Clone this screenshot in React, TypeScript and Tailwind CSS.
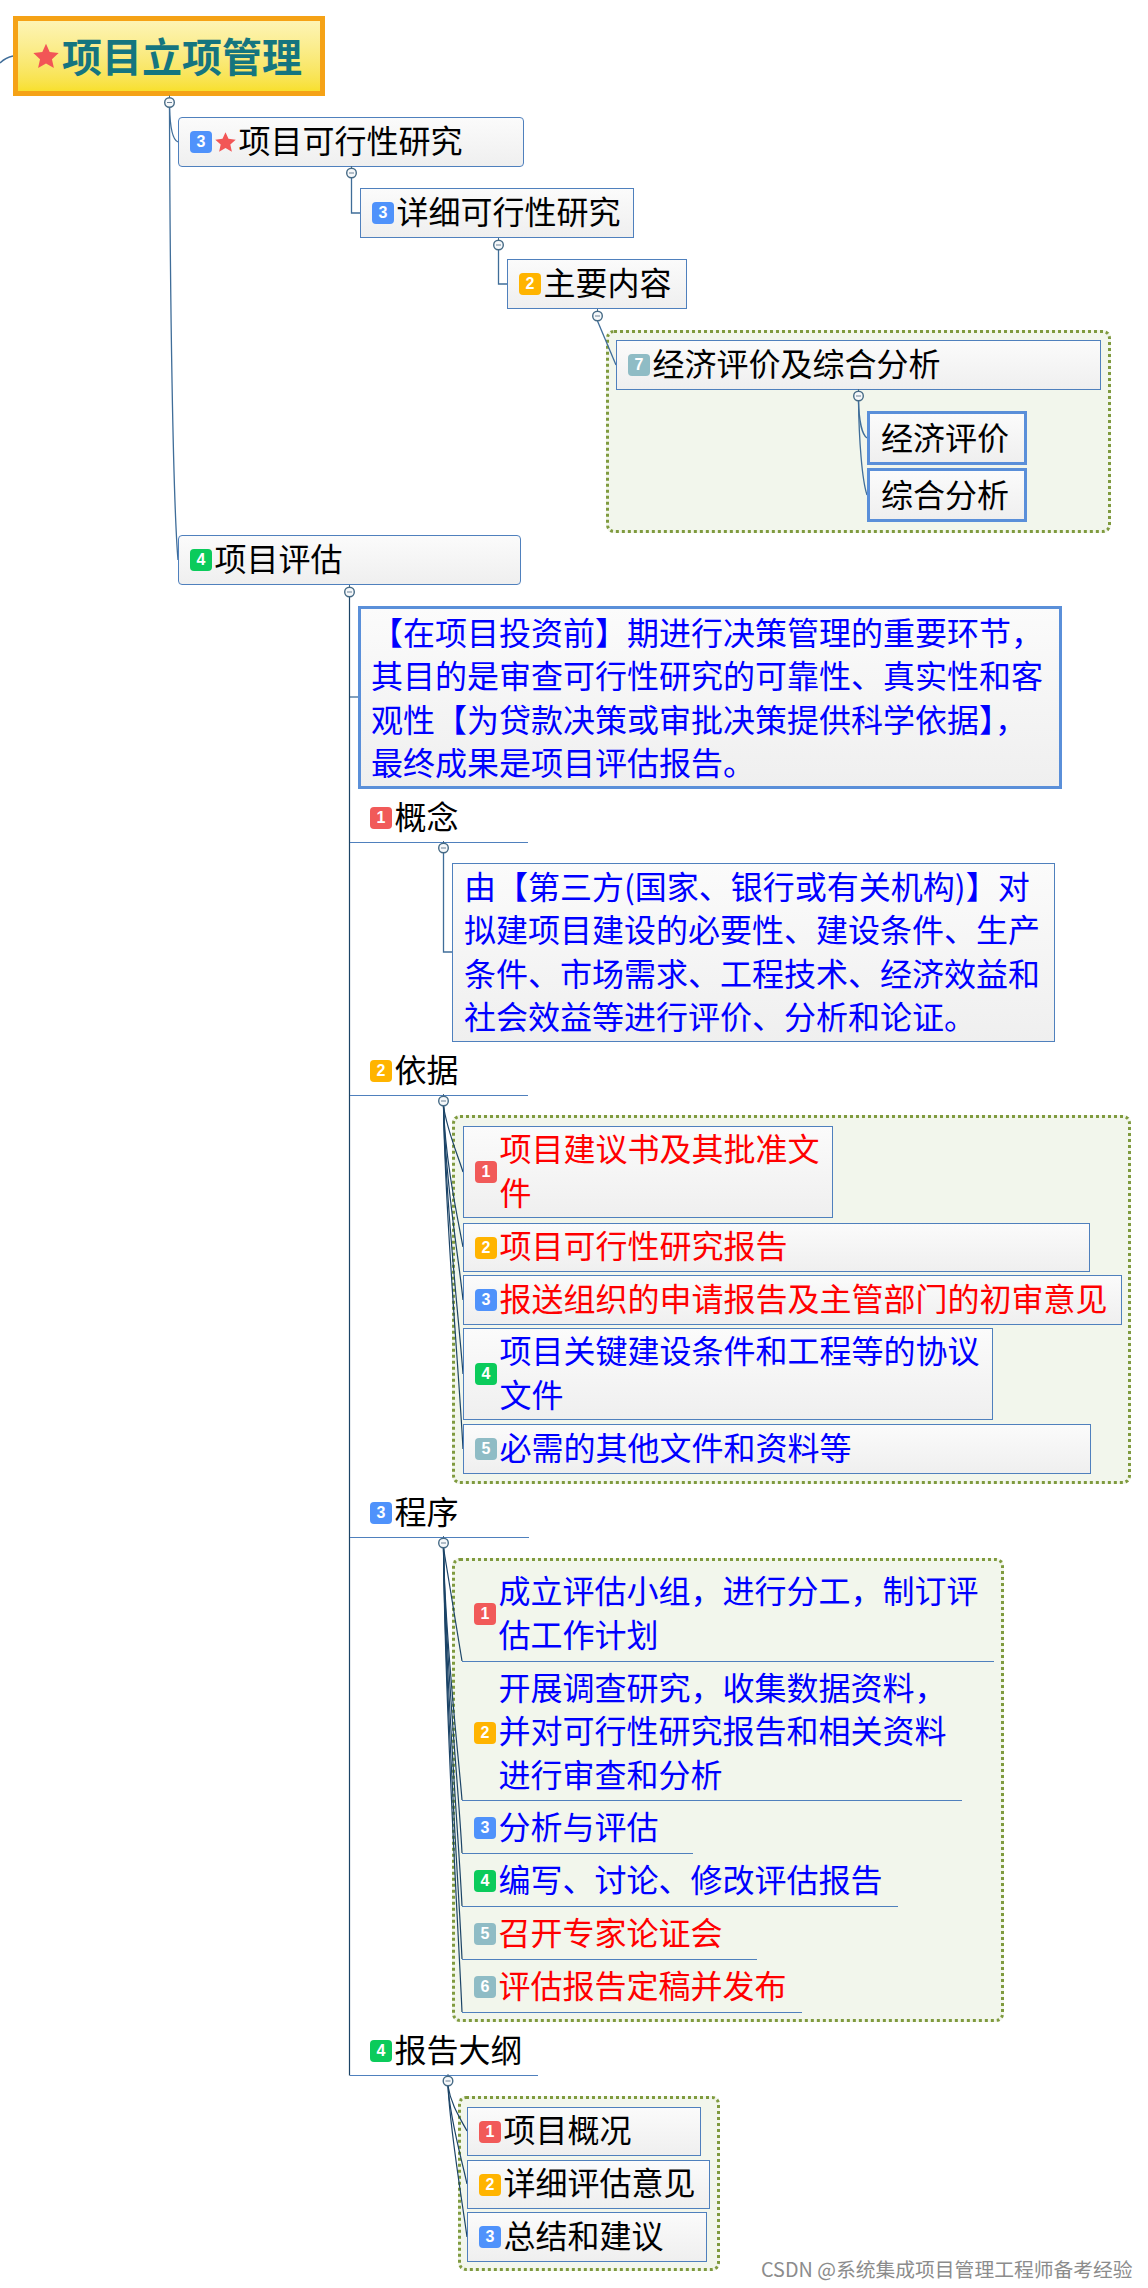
const CJK = "font-['Microsoft_YaHei','Noto_Sans_CJK_SC','Noto_Sans',sans-serif]";

const BADGE: Record<number, string> = {
  1: 'bg-[#f15a59]',
  2: 'bg-[#ffb400]',
  3: 'bg-[#4f92fb]',
  4: 'bg-[#0bcb5b]',
  5: 'bg-[#8fbcc5]',
  6: 'bg-[#8fbcc5]',
  7: 'bg-[#8fbcc5]',
};

function Badge({ n }: { n: number }) {
  return (
    <span
      className={`flex h-[22px] w-[22px] shrink-0 items-center justify-center rounded-[4px] font-['Liberation_Sans',sans-serif] text-[16px] font-bold leading-none text-white ${BADGE[n]}`}
    >
      {n}
    </span>
  );
}

function Star({ className }: { className: string }) {
  return (
    <svg viewBox="0 0 24 24" className={`shrink-0 ${className}`}>
      <path d="M12 .8l3.4 7.6 8.3.9-6.2 5.6 1.8 8.2L12 18.9l-7.3 4.2 1.8-8.2L.3 9.3l8.3-.9z" fill="#f25656" />
    </svg>
  );
}

const BOX = 'bg-gradient-to-b from-[#fbfbfb] to-[#efefef] border-[#4f80bd]';

type Item = { cls: string; n?: number; star?: boolean; lines: string[]; color: string };

function Node({ cls, n, star, lines, color }: Item) {
  return (
    <div className={`absolute flex items-center box-border ${cls}`}>
      {n ? <Badge n={n} /> : null}
      {star ? <Star className="ml-[3px] h-[22px] w-[21px]" /> : null}
      <div className={`ml-[2.500px] whitespace-nowrap pb-[5px] text-[32px] leading-[43.3px] ${color}`}>
        {lines.map((l) => (
          <div key={l}>{l}</div>
        ))}
      </div>
    </div>
  );
}

const BK = 'text-[#000000]';
const BL = 'text-[#0000ff]';
const RD = 'text-[#ff0000]';
const N1 = `${BOX} border pl-[11px]`;
const U = 'pl-[12px] border-b border-[#4f80bd]';
const L = 'pl-[20px] border-b border-[#4f80bd]';

const items: Item[] = [
  { cls: `left-[178px] top-[117px] w-[346px] h-[50px] rounded-[4px] ${N1}`, n: 3, star: true, lines: ['项目可行性研究'], color: BK },
  { cls: `left-[360px] top-[188px] w-[274px] h-[50px] ${N1}`, n: 3, lines: ['详细可行性研究'], color: BK },
  { cls: `left-[507px] top-[259px] w-[180px] h-[50px] ${N1}`, n: 2, lines: ['主要内容'], color: BK },
  { cls: `left-[616px] top-[340px] w-[485px] h-[50px] ${N1}`, n: 7, lines: ['经济评价及综合分析'], color: BK },
  { cls: `left-[178px] top-[535px] w-[343px] h-[50px] rounded-[4px] ${N1}`, n: 4, lines: ['项目评估'], color: BK },
  { cls: `left-[350px] top-[794px] w-[178px] h-[49px] ${L}`, n: 1, lines: ['概念'], color: BK },
  { cls: `left-[350px] top-[1047px] w-[178px] h-[49px] ${L}`, n: 2, lines: ['依据'], color: BK },
  { cls: `left-[350px] top-[1489px] w-[179px] h-[49px] ${L}`, n: 3, lines: ['程序'], color: BK },
  { cls: `left-[350px] top-[2027px] w-[188px] h-[49px] ${L}`, n: 4, lines: ['报告大纲'], color: BK },

  { cls: `left-[463px] top-[1126px] w-[370px] h-[92px] ${N1}`, n: 1, lines: ['项目建议书及其批准文', '件'], color: RD },
  { cls: `left-[463px] top-[1223px] w-[627px] h-[49px] ${N1}`, n: 2, lines: ['项目可行性研究报告'], color: RD },
  { cls: `left-[463px] top-[1275px] w-[659px] h-[50px] ${N1}`, n: 3, lines: ['报送组织的申请报告及主管部门的初审意见'], color: RD },
  { cls: `left-[463px] top-[1328px] w-[530px] h-[92px] ${N1}`, n: 4, lines: ['项目关键建设条件和工程等的协议', '文件'], color: BL },
  { cls: `left-[463px] top-[1424px] w-[628px] h-[50px] ${N1}`, n: 5, lines: ['必需的其他文件和资料等'], color: BL },

  { cls: `left-[462px] top-[1567px] w-[532px] h-[95px] ${U}`, n: 1, lines: ['成立评估小组，进行分工，制订评', '估工作计划'], color: BL },
  { cls: `left-[462px] top-[1665px] w-[500px] h-[136px] ${U}`, n: 2, lines: ['开展调查研究，收集数据资料，', '并对可行性研究报告和相关资料', '进行审查和分析'], color: BL },
  { cls: `left-[462px] top-[1803px] w-[231px] h-[51px] ${U}`, n: 3, lines: ['分析与评估'], color: BL },
  { cls: `left-[462px] top-[1856px] w-[436px] h-[51px] ${U}`, n: 4, lines: ['编写、讨论、修改评估报告'], color: BL },
  { cls: `left-[462px] top-[1909px] w-[295px] h-[51px] ${U}`, n: 5, lines: ['召开专家论证会'], color: RD },
  { cls: `left-[462px] top-[1962px] w-[340px] h-[51px] ${U}`, n: 6, lines: ['评估报告定稿并发布'], color: RD },

  { cls: `left-[467px] top-[2107px] w-[234px] h-[49px] ${N1}`, n: 1, lines: ['项目概况'], color: BK },
  { cls: `left-[467px] top-[2160px] w-[243px] h-[49px] ${N1}`, n: 2, lines: ['详细评估意见'], color: BK },
  { cls: `left-[467px] top-[2212px] w-[240px] h-[50px] ${N1}`, n: 3, lines: ['总结和建议'], color: BK },
];

const groups = [
  'left-[606px] top-[330px] w-[505px] h-[203px]',
  'left-[452px] top-[1115px] w-[679px] h-[369px]',
  'left-[452px] top-[1558px] w-[552px] h-[464px]',
  'left-[458px] top-[2096px] w-[262px] h-[175px]',
];

const links = [
  'M0 63C4 59 8 57 13 56',
  'M169.500 107C170 125 172 140 178 142',
  'M169.500 107C170 300 173 500 178 560',
  'M351.500 178V213H360',
  'M498.500 250V284H507',
  'M597.500 321L616 365',
  'M858.500 401C859 420 862 435 867 438',
  'M858.500 401C859 440 862 480 867 495',
  'M349.500 697H358',
  'M443.500 853V952H452',
];

const fans: string[] = [
  'M349.500 597V2075.500',
  'M443.500 1106C447 1130 456 1150 463 1172',
  'M443.500 1106C445 1160 458 1220 463 1247',
  'M443.500 1106C445 1180 459 1260 463 1300',
  'M443.500 1106C445 1200 459 1320 463 1374',
  'M443.500 1106C445 1220 459 1370 463 1449',
  'M443.500 1548L462 1661',
  'M443.500 1548C445 1640 458 1750 462 1800',
  'M443.500 1548C445 1660 459 1790 462 1853',
  'M443.500 1548C445 1680 459 1840 462 1906',
  'M443.500 1548C445 1700 459 1890 462 1959',
  'M443.500 1548C445 1720 459 1940 462 2012',
  'M448 2086C451 2105 460 2118 467 2131',
  'M448 2086C450 2120 462 2160 467 2184',
  'M448 2086C450 2130 462 2200 467 2237',
];

const circles: [number, number][] = [
  [169.5, 102.5], [351.5, 173], [498.5, 245], [597.5, 316], [858.5, 396],
  [349.5, 592], [443.5, 848], [443.5, 1101], [443.5, 1543], [448, 2081],
];

function Blue({ cls, lines }: { cls: string; lines: string[] }) {
  return (
    <div className={`absolute box-border ${cls} ${BOX}`}>
      <div className="whitespace-nowrap text-[32px] leading-[43.3px] text-[#0000ff]">
        {lines.map((l) => (
          <div key={l}>{l}</div>
        ))}
      </div>
    </div>
  );
}

export default function App() {
  return (
    <div className={`relative h-[2288px] w-[1148px] overflow-hidden bg-white ${CJK}`}>
      {groups.map((g) => (
        <div key={g} className={`absolute box-border rounded-[8px] border-[3px] border-dotted border-[#7f9a3e] bg-[#f2f6ec] ${g}`} />
      ))}

      <svg className="absolute left-0 top-0" width="1148" height="2288" fill="none">
        {links.map((d) => (
          <path key={d} d={d} stroke="#3f6d99" strokeWidth="1.3" />
        ))}
        {fans.map((d) => (
          <path key={d} d={d} stroke="#1c4467" strokeWidth="1.2" />
        ))}
      </svg>

      {/* root */}
      <div className="absolute left-[13px] top-[16px] flex h-[80px] w-[312px] box-border items-center border-[5px] border-[#f5a216] bg-gradient-to-b from-[#fdf4b4] to-[#f8e02c] pl-[15px]">
        <Star className="h-[26px] w-[26px]" />
        <span className="ml-[3px] whitespace-nowrap pb-[2px] text-[40px] font-bold leading-none text-[#15757f]">项目立项管理</span>
      </div>

      {items.map((it) => (
        <Node key={it.lines[0]} {...it} />
      ))}

      {/* plain outlined leaves */}
      <div className="absolute left-[867px] top-[411px] box-border flex h-[54px] w-[160px] items-center border-[3px] border-[#5a8fd9] bg-gradient-to-b from-[#fbfbfb] to-[#efefef] pb-[4px] pl-[11px] text-[32px] text-black">经济评价</div>
      <div className="absolute left-[867px] top-[468px] box-border flex h-[54px] w-[160px] items-center border-[3px] border-[#5a8fd9] bg-gradient-to-b from-[#fbfbfb] to-[#efefef] pb-[4px] pl-[11px] text-[32px] text-black">综合分析</div>

      <Blue
        cls="left-[358px] top-[606px] h-[183px] w-[704px] border-[3px] border-[#5a8fd9] pl-[10px] pt-[1px]"
        lines={[
          '【在项目投资前】期进行决策管理的重要环节，',
          '其目的是审查可行性研究的可靠性、真实性和客',
          '观性【为贷款决策或审批决策提供科学依据】，',
          '最终成果是项目评估报告。',
        ]}
      />
      <Blue
        cls="left-[452px] top-[863px] h-[179px] w-[603px] border pl-[11px]"
        lines={[
          '由【第三方(国家、银行或有关机构)】对',
          '拟建项目建设的必要性、建设条件、生产',
          '条件、市场需求、工程技术、经济效益和',
          '社会效益等进行评价、分析和论证。',
        ]}
      />

      {/* collapse toggles */}
      <svg className="absolute left-0 top-0" width="1148" height="2288" fill="none">
        {circles.map(([x, y]) => (
          <g key={`${x}-${y}`}>
            <path d={`M${x} ${y - 7}V${y - 4}`} stroke="#466a85" strokeWidth="1" />
            <circle cx={x} cy={y} r="4.800" fill="#f6f8fa" stroke="#466a85" strokeWidth="1.400" />
            <path d={`M${x - 2.5} ${y}H${x + 2.5}`} stroke="#6d8296" strokeWidth="1" />
          </g>
        ))}
      </svg>

      <div className="absolute left-[761px] top-[2257px] whitespace-nowrap text-[19.800px] leading-[24px] text-[#8c8c8c]">
        CSDN @系统集成项目管理工程师备考经验
      </div>
    </div>
  );
}
